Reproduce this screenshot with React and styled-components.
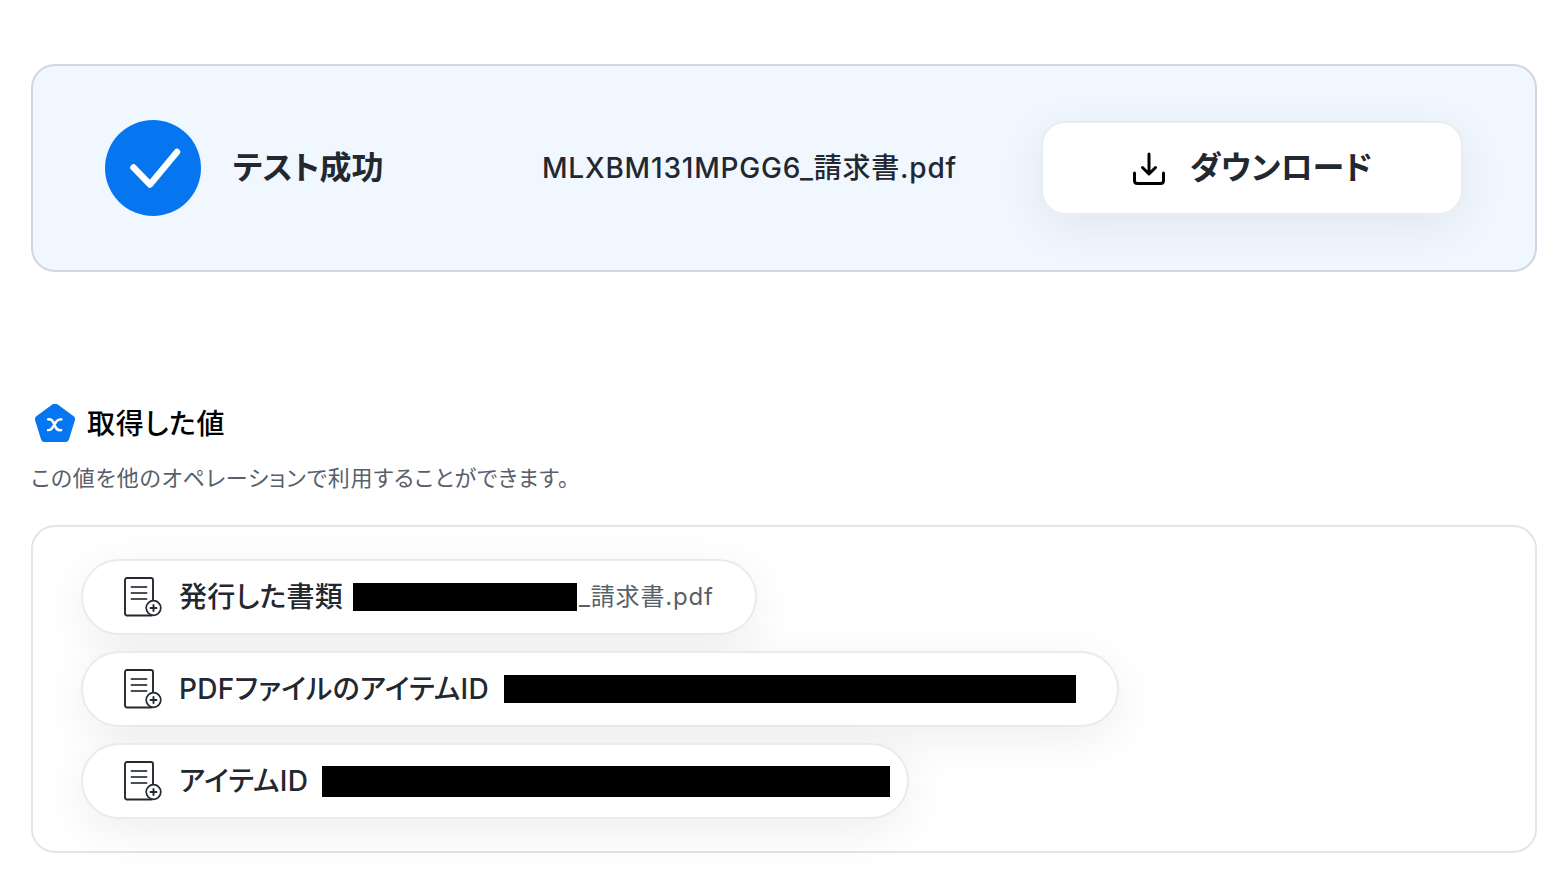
import React from "react";
import styled, { createGlobalStyle } from "styled-components";

const GlobalStyle = createGlobalStyle`
  *, *::before, *::after { box-sizing: border-box; }
  body {
    margin: 0;
    background: #ffffff;
    color: #23272f;
    font-family: Inter, "Noto Sans CJK JP", sans-serif;
    font-feature-settings: "palt";
    letter-spacing: 0.05em;
  }
`;

const Page = styled.main`
  padding: 64px 31px 33px;
`;

const Banner = styled.section`
  display: flex;
  align-items: center;
  padding: 54px 72px;
  border: 2px solid #d0d7e2;
  border-radius: 24px;
  background: #f0f7ff;
`;

const Status = styled.div`
  flex: 1;
  display: flex;
  align-items: center;
  gap: 32px;
`;

const StatusTitle = styled.h1`
  margin: 0;
  font-size: 32px;
  line-height: 48px;
  font-weight: 600;
  letter-spacing: normal;
`;

const FileName = styled.p`
  margin: 0 84px 0 32px;
  font-size: 28px;
  line-height: 42px;
  font-weight: 500;
  white-space: nowrap;
`;

const DownloadButton = styled.button`
  display: flex;
  align-items: center;
  justify-content: center;
  gap: 24px;
  width: 422px;
  height: 94px;
  padding: 0;
  border: 2px solid #e8ecf3;
  border-radius: 24px;
  background: #ffffff;
  box-shadow: 0 12px 48px rgba(0, 0, 0, 0.07);
  color: inherit;
  font: inherit;
  font-feature-settings: inherit;
  font-size: 32px;
  line-height: 48px;
  font-weight: 600;
  letter-spacing: normal;
  cursor: pointer;
`;

const Values = styled.section`
  margin-top: 128px;
`;

const Heading = styled.h2`
  display: flex;
  align-items: center;
  gap: 12px;
  margin: 0;
  padding-left: 4px;
  color: #000000;
  font-size: 28px;
  line-height: 48px;
  font-weight: 500;
`;

const Description = styled.p`
  margin: 12px 0 29px;
  color: #57606a;
  font-size: 22px;
  line-height: 36px;
`;

const ValueList = styled.ul`
  display: flex;
  flex-direction: column;
  align-items: flex-start;
  gap: 16px;
  margin: 0;
  padding: 32px 48px;
  border: 2px solid #e3e5e7;
  border-radius: 24px;
  list-style: none;
`;

const Chip = styled.li`
  display: flex;
  align-items: center;
  height: 76px;
  padding: 0 ${(p) => p.$end}px 0 41px;
  border: 2px solid #e8ebf2;
  border-radius: 38px;
  background: #ffffff;
  box-shadow: 0 12px 48px rgba(0, 0, 0, 0.07);
`;

const ChipLabel = styled.span`
  margin-left: 17px;
  font-size: 28px;
  line-height: 42px;
  font-weight: 500;
  letter-spacing: 0.01em;
  white-space: nowrap;
`;

const ChipValue = styled.span`
  color: #57606a;
  font-size: 24px;
  line-height: 36px;
  white-space: nowrap;
`;

const Redaction = styled.span`
  width: ${(p) => p.$width}px;
  height: ${(p) => p.$height}px;
  margin-left: ${(p) => p.$gap}px;
  margin-right: ${(p) => p.$after || 0}px;
  background: #000000;
`;

const CheckIcon = () => (
  <svg width="96" height="96" viewBox="0 0 96 96" fill="none" aria-hidden="true">
    <circle cx="48" cy="48" r="48" fill="#0676f0" />
    <path d="M28.5 47.5 45 64.5 72 32" stroke="#fff" strokeWidth="6.5" strokeLinecap="round" strokeLinejoin="round" />
  </svg>
);

const DownloadIcon = () => (
  <svg width="34" height="34" viewBox="0 0 34 34" fill="none" stroke="#000" strokeWidth="3" strokeLinecap="round" strokeLinejoin="round" aria-hidden="true">
    <path d="M17 3V23M10.5 16.500 17 23 23.500 16.500" />
    <path d="M2.500 22V29.500Q2.500 32.500 5.500 32.500H28.500Q31.500 32.500 31.500 29.500V22" />
  </svg>
);

const PentagonIcon = () => (
  <svg width="40" height="40" viewBox="0 0 40 40" fill="none" aria-hidden="true">
    <path d="M20 3.500 36 15.200 30.200 34H9.800L4 15.200Z" fill="#0676f0" stroke="#0676f0" strokeWidth="8" strokeLinejoin="round" />
    <path d="M13 15.400C16.200 14.900 17.500 16.300 18.500 18.800L20.300 22.500C21.300 25.400 22.800 26.700 26.300 26.100M26.500 15.400C23.500 15.100 22.200 16.200 21 18L17.800 23.200C16.500 25.400 15.200 26.500 13 26.100" stroke="#fff" strokeWidth="2.400" strokeLinecap="round" />
  </svg>
);

const DocumentIcon = () => (
  <svg width="38" height="40" viewBox="0 0 38 40" fill="none" stroke="#23272f" strokeWidth="1.900" strokeLinecap="round" aria-hidden="true">
    <rect x="1" y="1" width="28" height="37.500" rx="2" />
    <path d="M7.500 10H22.500M7.500 16H22.500M7.500 22H22.500" stroke="#4a4e55" />
    <circle cx="29.500" cy="31" r="7.300" fill="#fff" strokeWidth="1.700" />
    <path d="M26.500 31H32.500M29.500 28V34" />
  </svg>
);

const values = [
  { label: "発行した書類", suffix: "_請求書.pdf", gap: 10, width: 224, height: 28, after: 2, end: 41 },
  { label: "PDFファイルのアイテムID", gap: 15, width: 572, height: 28, end: 41 },
  { label: "アイテムID", gap: 14, width: 568, height: 31, end: 17 },
];

export default function App() {
  return (
    <>
      <GlobalStyle />
      <Page>
        <Banner>
          <Status>
            <CheckIcon />
            <StatusTitle>テスト成功</StatusTitle>
          </Status>
          <FileName>MLXBM131MPGG6_請求書.pdf</FileName>
          <DownloadButton type="button">
            <DownloadIcon />
            ダウンロード
          </DownloadButton>
        </Banner>
        <Values>
          <Heading>
            <PentagonIcon />
            取得した値
          </Heading>
          <Description>この値を他のオペレーションで利用することができます。</Description>
          <ValueList>
            {values.map((v) => (
              <Chip key={v.label} $end={v.end}>
                <DocumentIcon />
                <ChipLabel>{v.label}</ChipLabel>
                <Redaction $gap={v.gap} $width={v.width} $height={v.height} $after={v.after} />
                {v.suffix && <ChipValue>{v.suffix}</ChipValue>}
              </Chip>
            ))}
          </ValueList>
        </Values>
      </Page>
    </>
  );
}
